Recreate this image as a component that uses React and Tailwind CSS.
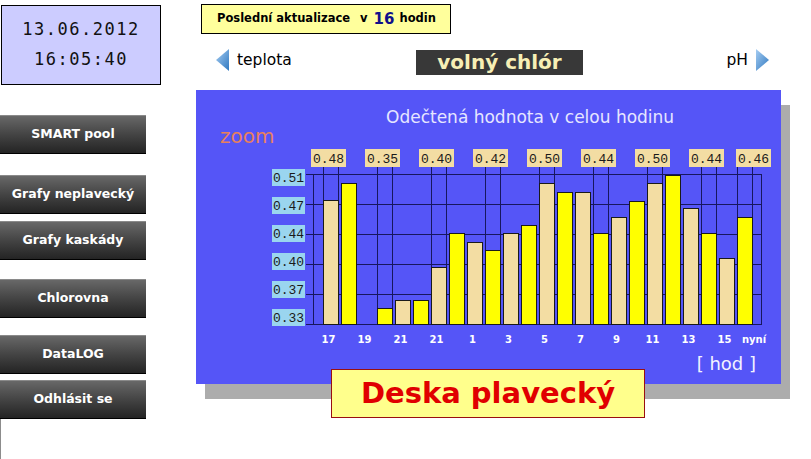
import React from "react";

const bars = [200, 183, null, 308, 300, 300, 267, 233, 242, 250, 233, 225, 183, 192, 192, 233, 217, 201, 183, 175, 208, 233, 258, 217];
const topLabels = [
  [0, "0.48"], [3, "0.35"], [6, "0.40"], [9, "0.42"], [12, "0.50"], [15, "0.44"], [18, "0.50"], [21, "0.44"], [23, "0.46"],
];
const yLabels = ["0.51", "0.47", "0.44", "0.40", "0.37", "0.33"];
const xLabels = ["17", "19", "21", "21", "1", "3", "5", "7", "9", "11", "13", "15"];

const OX = 196;
const OY = 120;
const slotX = (i) => 323 + 18 * i - OX;
const Y = (y) => y - OY;

function Chart() {
  const hLines = [174, 204, 234, 264, 294, 324];
  return (
    <svg width="585" height="232" className="block" style={{ fontFamily: '"DejaVu Sans", sans-serif' }}>
      <text x="24" y={Y(143)} fontSize="20" fill="#e8805c">zoom</text>
      {hLines.map((y) => (
        <line key={y} x1="110" x2="565.5" y1={Y(y) + 0.5} y2={Y(y) + 0.5} stroke="#17175e" strokeWidth="1" />
      ))}
      <line x1="117.5" x2="117.5" y1={Y(174)} y2={Y(325)} stroke="#17175e" />
      <line x1="565.5" x2="565.5" y1={Y(174)} y2={Y(325)} stroke="#17175e" />
      {topLabels.map(([s]) => (
        <g key={s}>
          <line x1={slotX(s) + 0.5} x2={slotX(s) + 0.5} y1={Y(167)} y2={Y(325)} stroke="#17175e" />
          <line x1={slotX(s) + 15.5} x2={slotX(s) + 15.5} y1={Y(167)} y2={Y(325)} stroke="#17175e" />
        </g>
      ))}
      {bars.map((t, i) =>
        t == null ? null : (
          <rect
            key={i}
            x={slotX(i) + 0.5}
            y={Y(t) + 0.5}
            width="15"
            height={324 - t}
            fill={i % 2 === 0 ? "#f3dda3" : "#ffff00"}
            stroke="#1a1a1a"
            strokeWidth="1"
          />
        )
      )}
      {yLabels.map((l, k) => (
        <g key={l}>
          <rect x="76" y={Y(169) + 28 * k} width="33" height="17" fill="#9ad5ef" />
          <text x="92.5" y={Y(169) + 28 * k + 13} fontSize="13" textAnchor="middle" fill="#1a1a1a" style={{ fontFamily: '"Liberation Mono", monospace' }}>
            {l}
          </text>
        </g>
      ))}
      {topLabels.map(([s, l]) => {
        const x = s === 23 ? slotX(s) - 1 : slotX(s) - 12;
        return (
          <g key={"t" + s}>
            <rect x={x} y={Y(149)} width="35" height="18" fill="#f3dda3" />
            <text x={x + 17.5} y={Y(149) + 13.5} fontSize="13" textAnchor="middle" fill="#1a1a1a" style={{ fontFamily: '"Liberation Mono", monospace' }}>
              {l}
            </text>
          </g>
        );
      })}
      {xLabels.map((l, k) => (
        <text key={k} x={slotX(2 * k) + 5.5} y={Y(343)} fontSize="10" fontWeight="bold" textAnchor="middle" fill="#ffffff">
          {l}
        </text>
      ))}
      <text x="558" y={Y(343)} fontSize="10" fontWeight="bold" textAnchor="middle" fill="#ffffff">nyní</text>
    </svg>
  );
}

function Arrow({ dir }) {
  const id = dir === "left" ? "gl" : "gr";
  return (
    <svg width="13" height="22" viewBox="0 0 13 22" className="block shrink-0">
      <defs>
        <linearGradient id={id} x1="0" y1="0" x2="1" y2="1">
          <stop offset="0" stopColor="#a6cdf2" />
          <stop offset="1" stopColor="#2f78c0" />
        </linearGradient>
      </defs>
      {dir === "left" ? (
        <polygon points="13,0 13,22 0,11" fill={`url(#${id})`} />
      ) : (
        <polygon points="0,0 0,22 13,11" fill={`url(#${id})`} />
      )}
    </svg>
  );
}

function Btn({ children, className }) {
  return (
    <div
      className={
        "flex w-[146px] h-[39px] items-center justify-center border-t border-[#8a8a8a] border-b border-b-black bg-linear-to-b from-[#686868] via-[#444444] to-[#242424] text-[12.5px] font-bold text-white " +
        className
      }
    >
      {children}
    </div>
  );
}

export default function App() {
  return (
    <div
      className="flex w-[811px] h-[459px] overflow-hidden bg-white text-black"
      style={{ fontFamily: '"DejaVu Sans", Verdana, sans-serif' }}
    >
      {/* left column */}
      <div className="flex w-[196px] shrink-0 flex-col">
        <div className="ml-[1px] mt-[5px] flex h-[80px] w-[160px] flex-col items-center border border-black bg-[#ccccff] text-[#111]" style={{ fontFamily: '"DejaVu Sans Mono", monospace' }}>
          <div className="mt-[13px] text-[17px] leading-[20px] tracking-[1.5px]">13.06.2012</div>
          <div className="mt-[10px] text-[17px] leading-[20px] tracking-[1.5px]">16:05:40</div>
        </div>
        <Btn className="mt-[30px]">SMART pool</Btn>
        <Btn className="mt-[21px]">Grafy neplavecký</Btn>
        <Btn className="mt-[7px]">Grafy kaskády</Btn>
        <Btn className="mt-[19px]">Chlorovna</Btn>
        <Btn className="mt-[17px]">DataLOG</Btn>
        <Btn className="mt-[6px]">Odhlásit se</Btn>
        <div className="w-px flex-1 bg-[#8c8c8c]" />
      </div>

      {/* right column */}
      <div className="flex w-[585px] flex-col">
        <div className="ml-[5px] mt-[4px] flex h-[30px] w-[250px] items-center border border-black bg-[#ffff9c] pl-[15px] text-[11.5px] font-bold">
          <span>Poslední aktualizace</span>
          <span className="ml-[10px]">v</span>
          <span className="ml-[6px] text-[15px] text-[#10108a]">16</span>
          <span className="ml-[5px]">hodin</span>
        </div>

        <div className="mt-[14px] flex h-[27px] items-start">
          <div className="mt-[1px] flex h-[22px] w-[220px] items-center pl-[20px]">
            <Arrow dir="left" />
            <span className="ml-[8px] text-[15.5px] leading-[22px]">teplota</span>
          </div>
          <div className="mt-[2px] flex h-[25px] w-[167px] items-center justify-center bg-[#383838] text-[20px] font-bold leading-[25px] text-[#f7efb5]">
            volný chlór
          </div>
          <div className="flex h-[24px] flex-1 items-center justify-end pr-[12px]">
            <span className="text-[15.5px] leading-[22px]">pH</span>
            <span className="ml-[8px]">
              <Arrow dir="right" />
            </span>
          </div>
        </div>

        <div className="mt-[15px] flex h-[294px] w-[585px] flex-col bg-[#5555f7] shadow-[9px_15px_0_0_#acacac]">
          <div className="h-[30px] pl-[190px] pt-[17px] text-[17px] leading-[20px] text-[#e6e6ff]">
            Odečtená hodnota v celou hodinu
          </div>
          <Chart />
          <div className="mt-[2px] pr-[25px] text-right text-[18px] leading-[20px] text-[#f2f2ff]">[ hod ]</div>
        </div>

        <div className="relative z-10 ml-[135px] mt-[-15px] flex h-[49px] w-[314px] items-center justify-center border border-[#9a1010] bg-[#ffff8c]">
          <span className="text-[29px] font-bold text-[#e00000]">Deska plavecký</span>
        </div>
      </div>
    </div>
  );
}
